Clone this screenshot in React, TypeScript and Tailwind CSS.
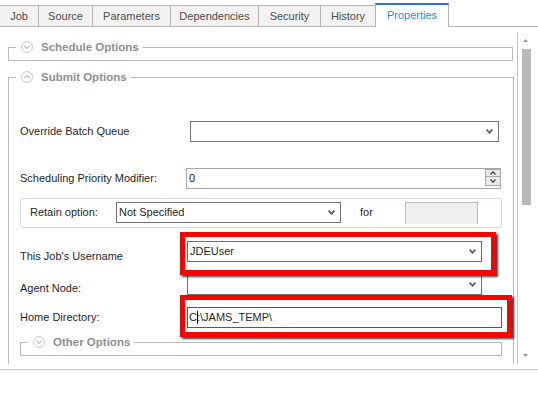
import React from "react";

function CircleChevron({ up }: { up?: boolean }) {
  return (
    <svg width="12" height="12" viewBox="0 0 12 12" className="shrink-0">
      <circle cx="6" cy="6" r="5.4" fill="none" stroke="#c6c6c6" strokeWidth="1" />
      {up ? (
        <path d="M3.4 7.2 L6 4.6 L8.6 7.2" fill="none" stroke="#bcbcbc" strokeWidth="1.2" />
      ) : (
        <path d="M3.4 4.8 L6 7.4 L8.6 4.8" fill="none" stroke="#bcbcbc" strokeWidth="1.2" />
      )}
    </svg>
  );
}

function Legend({ title, up }: { title: string; up?: boolean }) {
  return (
    <legend>
      <div className="flex h-[14px] items-center pl-[5px] pr-[4px]">
        <CircleChevron up={up} />
        <span className="ml-[8px] text-[11.5px] font-bold leading-[14px] text-[#8f8f8f]">{title}</span>
      </div>
    </legend>
  );
}

function DropChevron() {
  return (
    <svg width="7" height="5" viewBox="0 0 7 5" className="shrink-0">
      <path d="M0.6 0.6 L3.5 3.8 L6.4 0.6" fill="none" stroke="#5a5a5a" strokeWidth="1.7" />
    </svg>
  );
}

function Spinner() {
  return (
    <div className="-mr-px flex h-[18px] w-[16px] shrink-0 flex-col self-start">
      <div className="flex h-[8px] items-center justify-center border border-[#a8a8a8] bg-[#e9e9e9]">
        <svg width="6" height="4" viewBox="0 0 6 4">
          <path d="M0.5 3.5 L3 0.8 L5.5 3.5" fill="none" stroke="#444" strokeWidth="1.2" />
        </svg>
      </div>
      <div className="flex h-[9px] items-center justify-center border border-t-0 border-[#a8a8a8] bg-[#e9e9e9]">
        <svg width="6" height="4" viewBox="0 0 6 4">
          <path d="M0.5 0.5 L3 3.2 L5.5 0.5" fill="none" stroke="#444" strokeWidth="1.2" />
        </svg>
      </div>
    </div>
  );
}

const tabs = [
  { name: "Job", w: "w-[39px] border-l-0" },
  { name: "Source", w: "w-[55px] -ml-px" },
  { name: "Parameters", w: "w-[79px] -ml-px" },
  { name: "Dependencies", w: "w-[89px] -ml-px" },
  { name: "Security", w: "w-[63px] -ml-px" },
  { name: "History", w: "w-[56px] -ml-px" },
];

export default function App() {
  return (
    <div className="relative h-[393px] w-[538px] overflow-hidden bg-white font-['Liberation_Sans',Arial,sans-serif] text-[11px] leading-[13px] text-[#1f1f1f]">
      {/* Tab bar */}
      <div className="flex h-[27px] items-end">
        {tabs.map((t) => (
          <div
            key={t.name}
            className={`flex h-[22px] items-center justify-center border border-[#b4b4b4] bg-[#f2f2f2] text-[11px] text-[#4d4d4d] ${t.w}`}
          >
            {t.name}
          </div>
        ))}
        <div className="-ml-px flex h-[24px] w-[74px] items-center justify-center border-x border-t-2 border-[#b4b4b4] border-t-[#2d7ac8] bg-white pb-[1px] text-[11px] text-[#2a8ad8]">
          Properties
        </div>
        <div className="h-px flex-1 bg-[#b4b4b4]" />
      </div>

      {/* Body */}
      <div className="flex h-[343px] border-b border-[#c4c4c4] pt-[5px] pb-[5px]">
        <div className="h-[332px] w-[518px] overflow-hidden border-r border-[#c4c4c4]">
          {/* Schedule Options */}
          <fieldset className="ml-[8px] mt-[8px] w-[505px] border border-[#b9b9b9] px-[7px]">
            <Legend title="Schedule Options" />
            <div className="h-[6px]" />
          </fieldset>

          {/* Submit Options */}
          <fieldset className="ml-[8px] mt-[9px] w-[505px] border border-[#b9b9b9] px-[7px] pb-[40px]">
            <Legend title="Submit Options" up />
            <div className="px-[4px]">
              {/* Override Batch Queue */}
              <div className="mt-[37px] flex h-[21px] items-center">
                <span className="w-[170px] shrink-0">Override Batch Queue</span>
                <div className="flex h-[21px] w-[309px] items-center justify-end border border-[#767676] bg-white pr-[5px]">
                  <DropChevron />
                </div>
              </div>

              {/* Scheduling Priority Modifier */}
              <div className="mt-[26px] flex h-[21px] items-center">
                <span className="w-[166px] shrink-0">Scheduling Priority Modifier:</span>
                <div className="flex h-[21px] w-[315px] items-center border border-[#a8a8a8] bg-white pl-[2px]">
                  <span className="flex-1">0</span>
                  <Spinner />
                </div>
              </div>

              {/* Retain option group */}
              <div className="mt-[9px] flex h-[30px] items-start rounded-[3px] border border-[#d3dce5] pl-[9px] pt-[3px]">
                <span className="w-[86px] shrink-0 leading-[21px]">Retain option:</span>
                <div className="flex h-[21px] w-[225px] items-center border border-[#707070] bg-white pl-[2px] pr-[5px]">
                  <span className="flex-1">Not Specified</span>
                  <DropChevron />
                </div>
                <span className="ml-[19px] w-[45px] leading-[21px]">for</span>
                <div className="h-[22px] w-[73px] border-x border-t border-[#bcbcbc] bg-[#efefef]" />
              </div>

              {/* Username */}
              <div className="mt-[13px] flex h-[21px] items-start">
                <span className="mt-[9px] w-[167px] shrink-0">This Job's Username</span>
                <div className="flex h-[21px] w-[295px] items-center border border-[#6f6f6f] bg-white pl-[2px] pr-[5px]">
                  <span className="flex-1">JDEUser</span>
                  <DropChevron />
                </div>
              </div>

              {/* Agent Node */}
              <div className="mt-[12px] flex h-[21px] items-start">
                <span className="mt-[8px] w-[167px] shrink-0">Agent Node:</span>
                <div className="flex h-[21px] w-[295px] items-center justify-end border border-[#6f6f6f] bg-white pr-[5px]">
                  <DropChevron />
                </div>
              </div>

              {/* Home Directory */}
              <div className="mt-[12px] flex h-[21px] items-center">
                <span className="w-[167px] shrink-0">Home Directory:</span>
                <div className="flex h-[21px] w-[315px] items-center border border-[#2c6499] bg-white pl-[1px]">
                  <span>C</span>
                  <span className="-mr-px inline-block h-[13px] w-px bg-black" />
                  <span>:\JAMS_TEMP\</span>
                </div>
              </div>

              {/* Other Options */}
              <fieldset className="mt-[7px] w-full border border-[#b9b9b9] px-[7px]">
                <Legend title="Other Options" />
                <div className="h-[6px]" />
              </fieldset>
            </div>
          </fieldset>
        </div>

        {/* Scrollbar */}
        <div className="flex h-[332px] w-[20px] flex-col">
          <svg width="5" height="3" viewBox="0 0 5 3" className="ml-[5px] mt-[7px]">
            <path d="M0 3 L2.5 0 L5 3 Z" fill="#9a9a9a" />
          </svg>
          <div className="ml-[4px] mt-[7px] h-[156px] w-[9px] bg-[#b9b9b9]" />
          <div className="flex-1" />
          <svg width="5" height="3" viewBox="0 0 5 3" className="mb-[7px] ml-[5px]">
            <path d="M0 0 L2.5 3 L5 0 Z" fill="#9a9a9a" />
          </svg>
        </div>
      </div>

      {/* Red annotation boxes */}
      <div className="absolute left-[180px] top-[232px] h-[43px] w-[316px] border-[5px] border-[#ff0000] shadow-[2px_2px_2px_rgba(0,0,0,0.75)]" />
      <div className="absolute left-[180px] top-[295px] h-[42px] w-[332px] border-[5px] border-[#ff0000] shadow-[2px_2px_2px_rgba(0,0,0,0.75)]" />
    </div>
  );
}
